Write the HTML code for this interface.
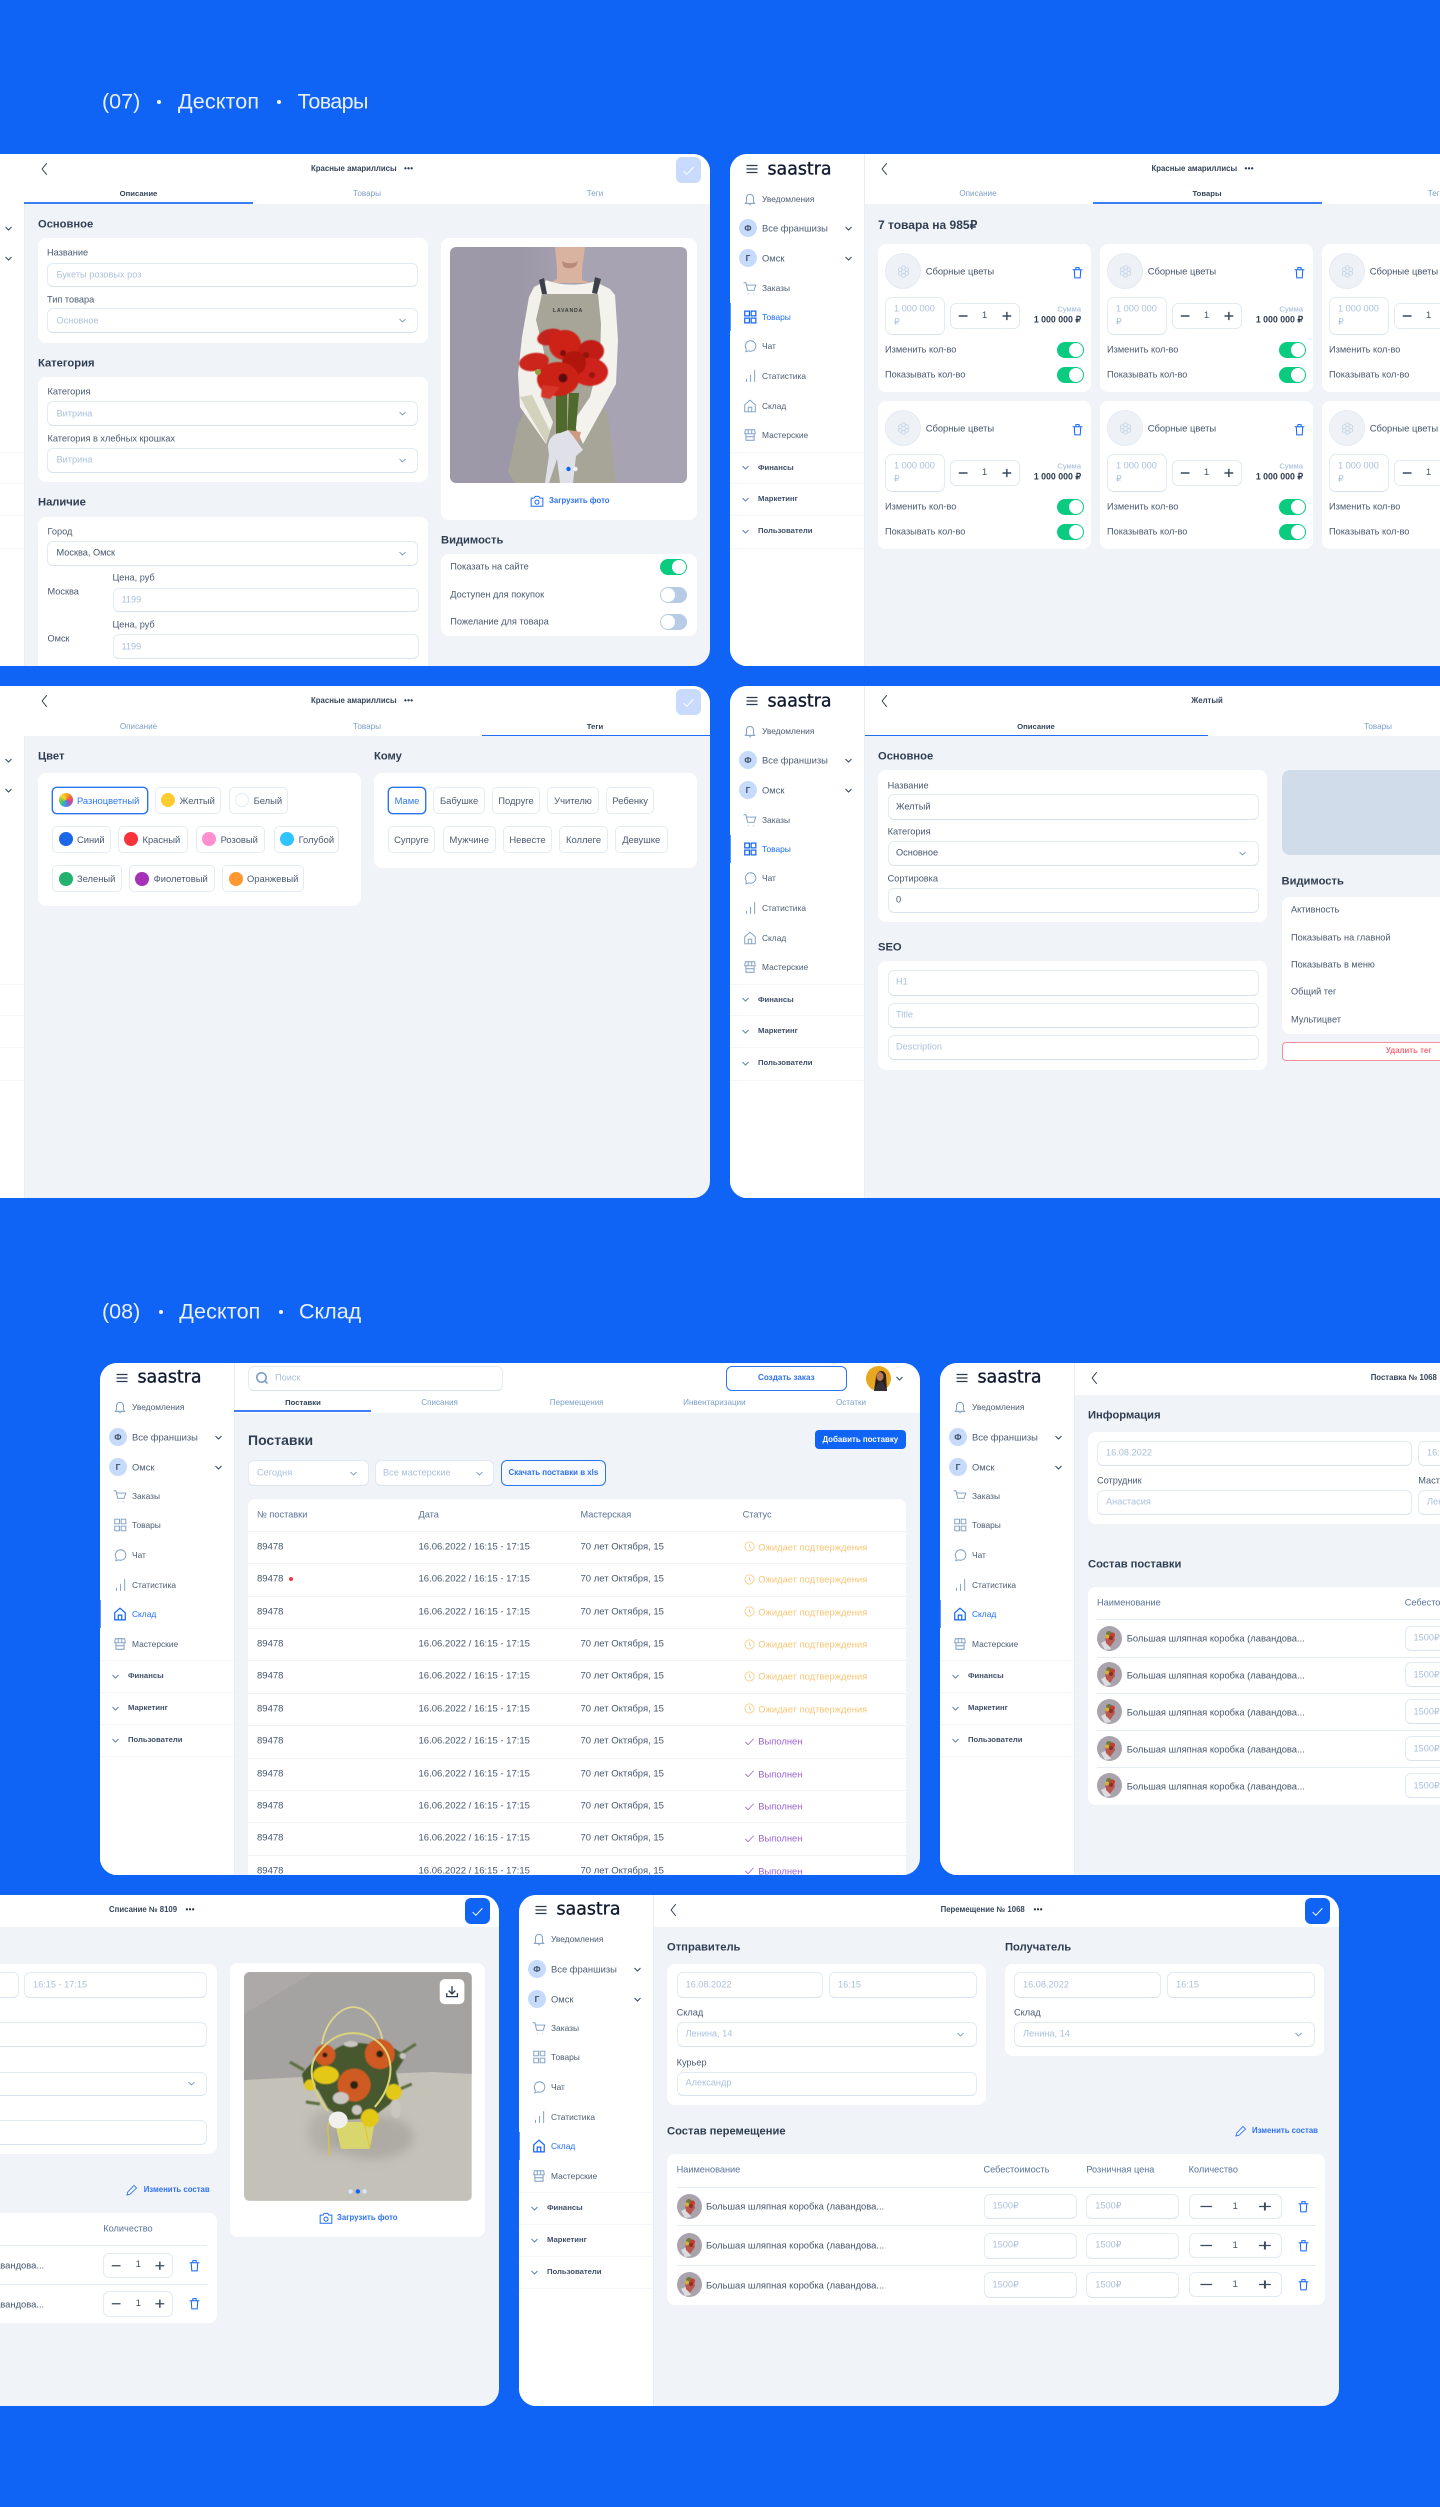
<!DOCTYPE html>
<html lang="ru"><head><meta charset="utf-8"><title>saastra</title>
<style>
html,body{margin:0;padding:0}
body{width:1440px;height:2507px;background:#0f64f6;overflow:hidden;position:relative;font-family:"Liberation Sans","Noto Sans CJK SC",sans-serif;color:#2b3a4e}
.big{position:absolute;color:#e8effe;font-size:21.5px;line-height:1;white-space:nowrap;transform:translateY(-50%)}
.dot{position:absolute;width:4px;height:4px;border-radius:50%;background:#f2f6ff}
.frame{position:absolute;width:820px;height:512px;background:#f0f3f8;border-radius:17px;overflow:hidden}
.in{position:absolute;width:0;height:0}
.side{position:absolute;left:0;top:0;width:134px;height:100%;background:#fff;border-right:1px solid #e8eef5;box-sizing:content-box}
.side>hr{position:absolute;left:0;width:134px;margin:0;border:0;border-top:1px solid #f3f6fa}
.side>.bar{position:absolute;left:0;width:1px;height:28px;background:#5e93f2}
.ic{position:absolute;left:13px;width:14px;height:14px;color:#7a9bc2;fill:none;stroke:currentColor;stroke-width:1.6;overflow:visible}
.ic.on{color:#1565f5;stroke-width:2.1}
.ch{position:absolute;width:9px;height:9px;color:#33465e;fill:none;stroke:currentColor;stroke-width:2.6}
.ch.b{color:#5c84b3}
.logo{position:absolute;left:37.5px;top:15.5px;transform:translateY(-50%);font-family:"DejaVu Sans",sans-serif;font-size:17.4px;line-height:1;color:#101b30;white-space:nowrap;-webkit-text-stroke:.35px #101b30}
.av{position:absolute;left:9px;width:18px;height:18px;border-radius:50%;background:#c6dafc;font-style:normal;font-size:8.4px;font-weight:bold;color:#3a4c63;text-align:center;line-height:18px}
.t{position:absolute;white-space:nowrap;line-height:1;transform:translateY(-50%)}
.tc{position:absolute;white-space:nowrap;line-height:1;transform:translate(-50%,-50%)}
.s{font-size:8.4px;color:#4c5d73;left:32px}
.s2{font-size:9.4px;color:#4c5d73;left:32px}
.s3{font-size:7.7px;font-weight:bold;color:#3f5068;left:28px}
.on-t{color:#1f6df5}
.hd{position:absolute;left:0;top:0;width:820px;height:50px;background:#fff}
.ttl{font-size:7.8px;font-weight:bold;color:#36455a}
.dots{font-size:8px;font-weight:bold;letter-spacing:.3px;color:#2b3a4e}
.tab{font-size:8.1px;color:#7d9fc8}
.tab.a{font-weight:bold;color:#36455a;font-size:7.7px}
.u{position:absolute;height:2px;background:#3d7ff2}
.h{font-size:11.2px;font-weight:bold;color:#2f3e52}
.c{position:absolute;background:#fff;border-radius:8px}
.l{font-size:9.2px;color:#4a5a70}
.p{font-size:9.2px;color:#abc1dc}
.v{font-size:9.2px;color:#43556b}
.f{position:absolute;background:#fff;border:1px solid #e2eaf4;border-bottom-color:#d9e3ef;border-radius:6px;box-sizing:border-box}
.ok{position:absolute;width:25px;height:25.5px;border-radius:6px;background:#0f64f6}
.ok.lt{background:#c8dbfd}
.ok svg{position:absolute;left:6px;top:6.5px;width:13px;height:13px;fill:none;stroke:#fff;stroke-width:1.8}
.tg{position:absolute;width:27px;height:16px;border-radius:8px;background:#0acb80}
.tg:after{content:"";position:absolute;right:1px;top:1px;width:14px;height:14px;border-radius:50%;background:#fff}
.tg.off{background:#b6cbe4}
.tg.off:after{right:auto;left:1px}
.card{position:absolute;width:213px;height:148px;background:#fff;border-radius:8px}
.st{position:absolute;background:#fff;border:1px solid #e2eaf4;border-radius:6px;box-sizing:border-box;text-align:center;font-size:9.6px;color:#43556b}
.st svg{position:absolute;left:0;top:0;width:100%;height:100%;fill:none;stroke:#3a4a5f;stroke-width:1.5}
.st span{position:absolute;left:0;right:0;top:50%;transform:translateY(-50%);line-height:1}
.tr{position:absolute;width:13px;height:13px;fill:none;stroke:#1565f5;stroke-width:1.9}
.fl{position:absolute;left:7px;top:9px;width:36px;height:36px;border-radius:50%;background:#eef2f7;border:1px solid #e4ebf3;box-sizing:border-box}
.fl svg{position:absolute;left:10.5px;top:10.5px;width:13px;height:13px;fill:none;stroke:#c5d5e7;stroke-width:1.7}
.cn{font-size:9.4px;color:#43556b}
.chip{position:absolute;height:27px;background:#fff;border:1px solid #e4ebf4;border-radius:5px;box-sizing:border-box;font-size:9.4px;color:#4a5a70;display:flex;align-items:center;justify-content:center;white-space:nowrap}
.chip.c2{justify-content:flex-start;padding-left:5.6px}
.chip b{display:block;width:14px;height:14px;border-radius:50%;margin-right:4.4px;flex:none}
.chip.act{border:1px solid #2b76f0;color:#2f78f4;box-shadow:0 0 0 .4px #2b76f0}
.row{position:absolute;left:248px;width:658px;height:32.4px;border-top:1.6px solid #eef2f7;box-sizing:border-box;background:#fff}
.row span{position:absolute;top:15px;transform:translateY(-50%);line-height:1;white-space:nowrap;font-size:9.5px;color:#47586e}
.row svg{position:absolute;top:9.5px;left:495.5px;width:11px;height:11px;fill:none;stroke-width:1.7}
.row span.pend{color:#f7c679;font-size:9.4px}.row span.done{color:#9c63d6;font-size:9.4px}
.bt{position:absolute;border-radius:6px;text-align:center;box-sizing:border-box;white-space:nowrap}
.thumb{position:absolute;width:25px;height:25px}
.ln{position:absolute;height:1px;background:#e6ecf4}
.pc{font-size:9.2px;color:#abc1dc}
.up{font-size:7.8px;font-weight:bold;color:#2f72ee}
.cam{position:absolute;width:14px;height:14px;fill:none;stroke:#1f6df5;stroke-width:1.7}
.tn{font-size:9.4px;color:#43556b}
</style></head><body>
<svg width="0" height="0" style="position:absolute">
<symbol id="burger" viewBox="0 0 24 24"><path d="M1 5h22M1 12h22M1 19h22" stroke-width="2.4"/></symbol>
<symbol id="bell" viewBox="0 0 24 24"><path d="M6 17v-7a6 6 0 0 1 12 0v7l2 2.500H4zM10 22h4"/></symbol>
<symbol id="cart" viewBox="0 0 24 24"><path d="M1 3h4l3 13h11l3-9H6"/><path d="M8.500 21.500h.8M17 21.500h.8" stroke-width="2.400"/></symbol>
<symbol id="grid" viewBox="0 0 24 24"><path d="M3 2h8v8H3zM14 2h8v8h-8zM3 14h8v8H3zM14 14h8v8h-8z"/></symbol>
<symbol id="chat" viewBox="0 0 24 24"><path d="M13 3a9 9 0 1 1-3.500 17.300L5 22l.6-5A9 9 0 0 1 13 3z"/></symbol>
<symbol id="stats" viewBox="0 0 24 24"><path d="M6 22v-5M13 22V10M20 22V2"/></symbol>
<symbol id="house" viewBox="0 0 24 24"><path d="M3 10l9-8 9 8v12H3zM9 22v-8h6v8"/></symbol>
<symbol id="shop" viewBox="0 0 24 24"><path d="M4 3h16l1 7H3zM5 10v11h14V10M5 15h14M9 3v7M15 3v7"/></symbol>
<symbol id="chev" viewBox="0 0 24 24"><path d="M4 8l8 8 8-8"/></symbol>
<symbol id="back" viewBox="0 0 24 24"><path d="M15 2L7 12l8 10"/></symbol>
<symbol id="trash" viewBox="0 0 24 24"><path d="M3 7h18M6 7l1 15h10l1-15M9 7V3h6v4"/></symbol>
<symbol id="check" viewBox="0 0 24 24"><path d="M3 13l6 6L21 6"/></symbol>
<symbol id="camera" viewBox="0 0 24 24"><path d="M2 7h5l2-3h6l2 3h5v14H2z"/><circle cx="12" cy="14" r="3.500"/></symbol>
<symbol id="pencil" viewBox="0 0 24 24"><path d="M2 22l1.500-6L16 3l5 5L8 20.500z"/></symbol>
<symbol id="clock" viewBox="0 0 24 24"><circle cx="12" cy="12" r="10"/><path d="M12 6v6.500l3.500 2"/></symbol>
<symbol id="flower" viewBox="0 0 24 24"><circle cx="12" cy="5" r="3.500"/><circle cx="12" cy="19" r="3.500"/><circle cx="6" cy="8.500" r="3.500"/><circle cx="18" cy="8.500" r="3.500"/><circle cx="6" cy="15.500" r="3.500"/><circle cx="18" cy="15.500" r="3.500"/></symbol>
<symbol id="step" viewBox="0 0 70 26" preserveAspectRatio="none"><path d="M8 13h9M53 13h9M57.500 8.500v9"/></symbol>
<symbol id="thumb" viewBox="0 0 25 25"><circle cx="12.500" cy="12.500" r="12.500" fill="#a8a3ad"/><path d="M4 17l6-3 4 9-6 1z" fill="#dcdce0"/><path d="M8 11l9-2 1 5-5 7-4-4z" fill="#b9564e"/><circle cx="12" cy="8" r="3" fill="#6e7b3c"/><circle cx="15.500" cy="9" r="2.500" fill="#c93a2f"/><circle cx="10" cy="10.500" r="2" fill="#d6b13a"/><circle cx="14" cy="12" r="2" fill="#8c2f26"/></symbol>
<filter id="bl" x="-30%" y="-30%" width="160%" height="160%"><feGaussianBlur stdDeviation="5"/></filter>
<filter id="bl1"><feGaussianBlur stdDeviation=".5"/></filter>
<linearGradient id="gw" x1="0" x2="1" y1="0" y2="0"><stop offset="0" stop-color="#9d99a8"/><stop offset=".3" stop-color="#9c98a8"/><stop offset=".55" stop-color="#a8a3b3"/><stop offset="1" stop-color="#a8a3b3"/></linearGradient>
</svg>

<!-- Headings -->
<span class="big" style="left:102px;top:102px">(07)</span><i class="dot" style="left:157px;top:100px"></i><span class="big" style="left:178px;top:102px;letter-spacing:.15px">Десктоп</span><i class="dot" style="left:276.700px;top:100px"></i><span class="big" style="left:297.500px;top:102px;letter-spacing:-.6px">Товары</span>
<span class="big" style="left:102px;top:1311.500px">(08)</span><i class="dot" style="left:159px;top:1309.500px"></i><span class="big" style="left:179.300px;top:1311.500px;letter-spacing:.15px">Десктоп</span><i class="dot" style="left:278.700px;top:1309.500px"></i><span class="big" style="left:299px;top:1311.500px">Склад</span>

<!-- FRAME 1 -->
<div class="frame" style="left:0;top:154px;width:710px;border-radius:0 17px 17px 0">
<div class="side" style="left:-110px"><hr style="top:297.500px"><hr style="top:329px"><hr style="top:361px"><hr style="top:393.500px">
<svg class="ch" style="left:114px;top:70px"><use href="#chev"/></svg><svg class="ch" style="left:114px;top:100px"><use href="#chev"/></svg></div>
<div class="in" style="left:0;top:-154px">
<div class="hd" style="left:24px;top:154px;width:686px"></div>
<svg class="ic" style="left:38px;top:162px;color:#2b3a4e;stroke-width:1.6"><use href="#back"/></svg>
<span class="t ttl" style="left:311px;top:169px">Красные амариллисы</span><span class="t dots" style="left:404px;top:169px">•••</span>
<div class="ok lt" style="left:676px;top:157px"><svg><use href="#check"/></svg></div>
<span class="tc tab a" style="left:138.500px;top:194px">Описание</span><span class="tc tab" style="left:367px;top:194px">Товары</span><span class="tc tab" style="left:595px;top:194px">Теги</span>
<div class="u" style="left:24px;top:202px;width:229px"></div>

<span class="t h" style="left:38px;top:224.500px">Основное</span>
<div class="c" style="left:38px;top:238px;width:389.500px;height:105px"></div>
<span class="t l" style="left:47px;top:253px">Название</span>
<div class="f" style="left:47px;top:262.500px;width:371px;height:24.500px"></div><span class="t p" style="left:56.500px;top:274.500px">Букеты розовых роз</span>
<span class="t l" style="left:47px;top:299.500px">Тип товара</span>
<div class="f" style="left:47px;top:308px;width:371px;height:25px"></div><span class="t p" style="left:56.500px;top:320.500px">Основное</span>
<svg class="ch b" style="left:398px;top:316px;stroke-width:2"><use href="#chev"/></svg>

<span class="t h" style="left:38px;top:363.500px">Категория</span>
<div class="c" style="left:38px;top:377px;width:389.500px;height:105px"></div>
<span class="t l" style="left:47.500px;top:392px">Категория</span>
<div class="f" style="left:47px;top:401px;width:371px;height:25px"></div><span class="t p" style="left:56.500px;top:413.500px">Витрина</span>
<svg class="ch b" style="left:398px;top:409px;stroke-width:2"><use href="#chev"/></svg>
<span class="t l" style="left:47.500px;top:439px">Категория в хлебных крошках</span>
<div class="f" style="left:47px;top:448px;width:371px;height:25px"></div><span class="t p" style="left:56.500px;top:460px">Витрина</span>
<svg class="ch b" style="left:398px;top:456px;stroke-width:2"><use href="#chev"/></svg>

<span class="t h" style="left:38px;top:502.500px">Наличие</span>
<div class="c" style="left:38px;top:517px;width:389.500px;height:170px"></div>
<span class="t l" style="left:47.500px;top:532px">Город</span>
<div class="f" style="left:47px;top:540.500px;width:371px;height:25px"></div><span class="t v" style="left:56.500px;top:553px">Москва, Омск</span>
<svg class="ch b" style="left:398px;top:548.500px;stroke-width:2"><use href="#chev"/></svg>
<span class="t l" style="left:112.500px;top:578px">Цена, руб</span><span class="t l" style="left:47.500px;top:592px">Москва</span>
<div class="f" style="left:112.500px;top:587.500px;width:306px;height:24.500px"></div><span class="t p" style="left:121.500px;top:599.500px">1199</span>
<span class="t l" style="left:112.500px;top:625px">Цена, руб</span><span class="t l" style="left:47.500px;top:638.500px">Омск</span>
<div class="f" style="left:112.500px;top:634px;width:306px;height:24.500px"></div><span class="t p" style="left:121.500px;top:646.500px">1199</span>

<div class="c" style="left:441px;top:237.500px;width:255.500px;height:282px"></div>
<svg style="position:absolute;left:450.300px;top:246.700px;width:237px;height:236px;border-radius:6px" viewBox="0 0 237 236">
<rect width="237" height="236" fill="url(#gw)"/>
<path d="M91 47H148L152 80L146 150L158 167L166 236H65L58 225L68 178L82 150L92 100L86 73Z" fill="#a6a598"/>
<path d="M105 0h30l-3 22v11l8 3-40 0 7-4V22z" fill="#d9b3a0"/>
<path d="M112 14c4 3 12 3 16 0l-2 5c-4 3-10 3-13 0z" fill="#b98a78"/>
<path d="M96 33c15 6 35 6 50 1l2 13H92z" fill="#f4f2ec"/>
<path d="M96 34L84 40 79 50 72 90 68 127 70 160 96 197 103 175 92 150 94 105 86 73 92 47z" fill="#f2f0ea"/>
<path d="M146 35L160 42 165 48 168 93 166 137 133 197 123 175 140 150 150 110 151 77 148 47z" fill="#f4f2ec"/>
<path d="M70 150c8 16 18 32 26 46l4-12-12-24-6-12z" fill="#d3d2bc"/>
<path d="M92 47l-3-14 5-2 3 16zM147 47l4-15-6-2-3 16z" fill="#3c4048"/>
<text x="118" y="65" text-anchor="middle" font-family="Liberation Sans,sans-serif" font-size="5.200" font-weight="bold" letter-spacing=".8" fill="#3a3a38">LAVANDA</text>
<path d="M106 146h11v46h-11zM119 146h10l-4 46h-8z" fill="#4f6a2c"/>
<g filter="url(#bl1)">
<ellipse cx="100" cy="90" rx="13" ry="8" fill="#c4201a" transform="rotate(-15 100 90)"/>
<ellipse cx="84" cy="115" rx="15" ry="9" fill="#cc251e" transform="rotate(-10 84 115)"/>
<ellipse cx="115" cy="98" rx="16" ry="15" fill="#cf2419"/>
<ellipse cx="141" cy="104" rx="13" ry="11" fill="#c11b14"/>
<ellipse cx="140" cy="125" rx="18" ry="14" fill="#d0241b"/>
<ellipse cx="124" cy="116" rx="12" ry="12" fill="#b11611"/>
<ellipse cx="108" cy="132" rx="21" ry="17" fill="#cb2118"/>
<path d="M92 138l18 2-10 12-9-2z" fill="#d8352c"/>
<circle cx="113" cy="131" r="4.500" fill="#5d0d0b"/><circle cx="113" cy="106" r="3" fill="#7f110e"/><circle cx="136" cy="108" r="3" fill="#8e120e"/><circle cx="142" cy="128" r="3" fill="#951510"/>
</g>
<circle cx="88" cy="125" r="3" fill="#8ea13f"/>
<path d="M118 183l13 2-3 11-8 2z" fill="#cf9983"/>
<path d="M98 200c0-8 6-14 12-14l8-3 5 6 10 14-7 6-3 27h-13l-3-24-8 24h-4l4-28z" fill="#dfe0e8"/>
<circle cx="111" cy="222" r="2.200" fill="#dfe6f2"/><circle cx="118.500" cy="222" r="2.200" fill="#0f64f6"/><circle cx="125.500" cy="222" r="2.200" fill="#eef2f8"/>
</svg>
<svg class="cam" style="left:530px;top:494px"><use href="#camera"/></svg><span class="t up" style="left:549px;top:500.500px">Загрузить фото</span>

<span class="t h" style="left:441px;top:540.500px">Видимость</span>
<div class="c" style="left:441px;top:554px;width:255.500px;height:82px"></div>
<span class="t l" style="left:450.300px;top:567px">Показать на сайте</span><div class="tg" style="left:660px;top:559px"></div>
<span class="t l" style="left:450.300px;top:594.500px">Доступен для покупок</span><div class="tg off" style="left:660px;top:586.500px"></div>
<span class="t l" style="left:450.300px;top:622px">Пожелание для товара</span><div class="tg off" style="left:660px;top:614px"></div>
</div></div>

<!-- FRAME 2 -->
<div class="frame" style="left:730px;top:154px;width:710px;border-radius:17px 0 0 17px">
<div class="side">
<svg class="ic" style="left:16px;top:9px;width:12px;height:12px;color:#2b3a4e;stroke-width:2"><use href="#burger"/></svg><span class="logo">saastra</span>
<svg class="ic" style="top:37.500px"><use href="#bell"/></svg><span class="t s" style="top:44.500px">Уведомления</span>
<i class="av" style="top:65px">Ф</i><span class="t s2" style="top:74px">Все франшизы</span><svg class="ch" style="left:114px;top:70px"><use href="#chev"/></svg>
<i class="av" style="top:95px">Г</i><span class="t s2" style="top:104px">Омск</span><svg class="ch" style="left:114px;top:100px"><use href="#chev"/></svg>
<svg class="ic" style="top:126.500px"><use href="#cart"/></svg><span class="t s" style="top:133.500px">Заказы</span>
<div class="bar" style="top:149px"></div><svg class="ic on" style="top:155.500px"><use href="#grid"/></svg><span class="t s on-t" style="top:162.500px">Товары</span>
<svg class="ic" style="top:185px"><use href="#chat"/></svg><span class="t s" style="top:192px">Чат</span>
<svg class="ic" style="top:215px"><use href="#stats"/></svg><span class="t s" style="top:222px">Статистика</span>
<svg class="ic" style="top:244.500px"><use href="#house"/></svg><span class="t s" style="top:251.500px">Склад</span>
<svg class="ic" style="top:274px"><use href="#shop"/></svg><span class="t s" style="top:281px">Мастерские</span>
<hr style="top:297.500px"><hr style="top:329px"><hr style="top:361px"><hr style="top:393.500px">
<svg class="ch b" style="left:11px;top:309px"><use href="#chev"/></svg><span class="t s3" style="top:313.500px">Финансы</span>
<svg class="ch b" style="left:11px;top:341px"><use href="#chev"/></svg><span class="t s3" style="top:345px">Маркетинг</span>
<svg class="ch b" style="left:11px;top:373px"><use href="#chev"/></svg><span class="t s3" style="top:377px">Пользователи</span>
</div>
<div class="in" style="left:-730px;top:-154px">
<div class="hd" style="left:865px;top:154px;width:575px"></div>
<svg class="ic" style="left:878px;top:162px;color:#2b3a4e;stroke-width:1.6"><use href="#back"/></svg>
<span class="t ttl" style="left:1151.500px;top:169px">Красные амариллисы</span><span class="t dots" style="left:1244.500px;top:169px">•••</span>
<span class="tc tab" style="left:978px;top:194px">Описание</span><span class="tc tab a" style="left:1207px;top:194px">Товары</span><span class="tc tab" style="left:1436px;top:194px">Теги</span>
<div class="u" style="left:1093px;top:202px;width:229px"></div>
<span class="t" style="left:878px;top:224.500px;font-size:12px;font-weight:bold;color:#2f3e52">7 товара на 985₽</span>

<div class="card" style="left:878px;top:244px"><div class="fl"><svg><use href="#flower"/></svg></div><span class="t cn" style="left:47.700px;top:27px">Сборные цветы</span><svg class="tr" style="left:192.500px;top:21.500px"><use href="#trash"/></svg><div class="f" style="left:7px;top:53px;width:60px;height:38px;border-radius:7px"></div><span class="t pc" style="left:16px;top:64.700px">1 000 000</span><span class="t pc" style="left:16px;top:77.500px">₽</span><div class="st" style="left:71.600px;top:59px;width:70px;height:26px"><svg><use href="#step"/></svg><span>1</span></div><span class="t" style="right:10px;top:65.400px;font-size:7.500px;color:#9db7d6">Сумма</span><span class="t" style="right:10px;top:76.400px;font-size:8.800px;font-weight:bold;color:#2b3a4e">1 000 000 ₽</span><span class="t l" style="left:7px;top:105.700px">Изменить кол-во</span><div class="tg" style="left:179px;top:98px"></div><span class="t l" style="left:7px;top:131px">Показывать кол-во</span><div class="tg" style="left:179px;top:123px"></div></div>
<div class="card" style="left:1100px;top:244px"><div class="fl"><svg><use href="#flower"/></svg></div><span class="t cn" style="left:47.700px;top:27px">Сборные цветы</span><svg class="tr" style="left:192.500px;top:21.500px"><use href="#trash"/></svg><div class="f" style="left:7px;top:53px;width:60px;height:38px;border-radius:7px"></div><span class="t pc" style="left:16px;top:64.700px">1 000 000</span><span class="t pc" style="left:16px;top:77.500px">₽</span><div class="st" style="left:71.600px;top:59px;width:70px;height:26px"><svg><use href="#step"/></svg><span>1</span></div><span class="t" style="right:10px;top:65.400px;font-size:7.500px;color:#9db7d6">Сумма</span><span class="t" style="right:10px;top:76.400px;font-size:8.800px;font-weight:bold;color:#2b3a4e">1 000 000 ₽</span><span class="t l" style="left:7px;top:105.700px">Изменить кол-во</span><div class="tg" style="left:179px;top:98px"></div><span class="t l" style="left:7px;top:131px">Показывать кол-во</span><div class="tg" style="left:179px;top:123px"></div></div>
<div class="card" style="left:1322px;top:244px"><div class="fl"><svg><use href="#flower"/></svg></div><span class="t cn" style="left:47.700px;top:27px">Сборные цветы</span><div class="f" style="left:7px;top:53px;width:60px;height:38px;border-radius:7px"></div><span class="t pc" style="left:16px;top:64.700px">1 000 000</span><span class="t pc" style="left:16px;top:77.500px">₽</span><div class="st" style="left:71.600px;top:59px;width:70px;height:26px"><svg><use href="#step"/></svg><span>1</span></div><span class="t l" style="left:7px;top:105.700px">Изменить кол-во</span><span class="t l" style="left:7px;top:131px">Показывать кол-во</span></div>
<div class="card" style="left:878px;top:401px"><div class="fl"><svg><use href="#flower"/></svg></div><span class="t cn" style="left:47.700px;top:27px">Сборные цветы</span><svg class="tr" style="left:192.500px;top:21.500px"><use href="#trash"/></svg><div class="f" style="left:7px;top:53px;width:60px;height:38px;border-radius:7px"></div><span class="t pc" style="left:16px;top:64.700px">1 000 000</span><span class="t pc" style="left:16px;top:77.500px">₽</span><div class="st" style="left:71.600px;top:59px;width:70px;height:26px"><svg><use href="#step"/></svg><span>1</span></div><span class="t" style="right:10px;top:65.400px;font-size:7.500px;color:#9db7d6">Сумма</span><span class="t" style="right:10px;top:76.400px;font-size:8.800px;font-weight:bold;color:#2b3a4e">1 000 000 ₽</span><span class="t l" style="left:7px;top:105.700px">Изменить кол-во</span><div class="tg" style="left:179px;top:98px"></div><span class="t l" style="left:7px;top:131px">Показывать кол-во</span><div class="tg" style="left:179px;top:123px"></div></div>
<div class="card" style="left:1100px;top:401px"><div class="fl"><svg><use href="#flower"/></svg></div><span class="t cn" style="left:47.700px;top:27px">Сборные цветы</span><svg class="tr" style="left:192.500px;top:21.500px"><use href="#trash"/></svg><div class="f" style="left:7px;top:53px;width:60px;height:38px;border-radius:7px"></div><span class="t pc" style="left:16px;top:64.700px">1 000 000</span><span class="t pc" style="left:16px;top:77.500px">₽</span><div class="st" style="left:71.600px;top:59px;width:70px;height:26px"><svg><use href="#step"/></svg><span>1</span></div><span class="t" style="right:10px;top:65.400px;font-size:7.500px;color:#9db7d6">Сумма</span><span class="t" style="right:10px;top:76.400px;font-size:8.800px;font-weight:bold;color:#2b3a4e">1 000 000 ₽</span><span class="t l" style="left:7px;top:105.700px">Изменить кол-во</span><div class="tg" style="left:179px;top:98px"></div><span class="t l" style="left:7px;top:131px">Показывать кол-во</span><div class="tg" style="left:179px;top:123px"></div></div>
<div class="card" style="left:1322px;top:401px"><div class="fl"><svg><use href="#flower"/></svg></div><span class="t cn" style="left:47.700px;top:27px">Сборные цветы</span><div class="f" style="left:7px;top:53px;width:60px;height:38px;border-radius:7px"></div><span class="t pc" style="left:16px;top:64.700px">1 000 000</span><span class="t pc" style="left:16px;top:77.500px">₽</span><div class="st" style="left:71.600px;top:59px;width:70px;height:26px"><svg><use href="#step"/></svg><span>1</span></div><span class="t l" style="left:7px;top:105.700px">Изменить кол-во</span><span class="t l" style="left:7px;top:131px">Показывать кол-во</span></div>
</div></div>

<!-- FRAME 3 -->
<div class="frame" style="left:0;top:686px;width:710px;border-radius:0 17px 17px 0">
<div class="side" style="left:-110px"><hr style="top:297.500px"><hr style="top:329px"><hr style="top:361px"><hr style="top:393.500px">
<svg class="ch" style="left:114px;top:70px"><use href="#chev"/></svg><svg class="ch" style="left:114px;top:100px"><use href="#chev"/></svg></div>
<div class="in" style="left:0;top:-686px">
<div class="hd" style="left:24px;top:686px;width:686px"></div>
<svg class="ic" style="left:38px;top:694px;color:#2b3a4e;stroke-width:1.6"><use href="#back"/></svg>
<span class="t ttl" style="left:311px;top:701px">Красные амариллисы</span><span class="t dots" style="left:404px;top:701px">•••</span>
<div class="ok lt" style="left:676px;top:689px"><svg><use href="#check"/></svg></div>
<span class="tc tab" style="left:138.500px;top:726.500px">Описание</span><span class="tc tab" style="left:367px;top:726.500px">Товары</span><span class="tc tab a" style="left:595px;top:726.500px">Теги</span>
<div class="u" style="left:481.500px;top:734.500px;width:228.500px;height:1.500px;background:#1f6df5"></div>
<span class="t h" style="left:38px;top:757px">Цвет</span><span class="t h" style="left:374px;top:757px">Кому</span>
<div class="c" style="left:38px;top:773px;width:322.500px;height:133px"></div>
<div class="c" style="left:374px;top:773px;width:322.500px;height:95px"></div>
<div class="chip c2 act" style="left:52px;top:786.500px;width:95.500px"><b style="background:conic-gradient(#f6b21f,#f2792a,#e8457c,#9a58c9,#4f8be8,#28c2a0,#8acb3e,#f6d531,#f6b21f)"></b>Разноцветный</div>
<div class="chip c2" style="left:154.700px;top:786.500px;width:66px"><b style="background:#ffcb2f"></b>Желтый</div>
<div class="chip c2" style="left:228.600px;top:786.500px;width:59.700px"><b style="background:#fff;border:1px solid #e4ebf4;box-sizing:border-box"></b>Белый</div>
<div class="chip c2" style="left:52px;top:825.700px;width:58.600px"><b style="background:#1c66e8"></b>Синий</div>
<div class="chip c2" style="left:117.500px;top:825.700px;width:70.700px"><b style="background:#f9333a"></b>Красный</div>
<div class="chip c2" style="left:195.600px;top:825.700px;width:69.800px"><b style="background:#ff8fce"></b>Розовый</div>
<div class="chip c2" style="left:273.600px;top:825.700px;width:65.700px"><b style="background:#2fc4fc"></b>Голубой</div>
<div class="chip c2" style="left:52px;top:865px;width:69.700px"><b style="background:#23b26d"></b>Зеленый</div>
<div class="chip c2" style="left:128.600px;top:865px;width:86.300px"><b style="background:#a632b8"></b>Фиолетовый</div>
<div class="chip c2" style="left:222px;top:865px;width:82.400px"><b style="background:#ff9831"></b>Оранжевый</div>
<div class="chip act" style="left:388px;top:786.500px;width:38px">Маме</div>
<div class="chip" style="left:433.400px;top:786.500px;width:51.400px">Бабушке</div>
<div class="chip" style="left:491.700px;top:786.500px;width:48.700px">Подруге</div>
<div class="chip" style="left:547.300px;top:786.500px;width:51.400px">Учителю</div>
<div class="chip" style="left:606px;top:786.500px;width:48.300px">Ребенку</div>
<div class="chip" style="left:388px;top:826.300px;width:47px">Супруге</div>
<div class="chip" style="left:442.600px;top:826.300px;width:53.300px">Мужчине</div>
<div class="chip" style="left:502.700px;top:826.300px;width:49.600px">Невесте</div>
<div class="chip" style="left:559.200px;top:826.300px;width:48.700px">Коллеге</div>
<div class="chip" style="left:614.800px;top:826.300px;width:52.800px">Девушке</div>
</div></div>

<!-- FRAME 4 -->
<div class="frame" style="left:730px;top:686px;width:710px;border-radius:17px 0 0 17px">
<div class="side">
<svg class="ic" style="left:16px;top:9px;width:12px;height:12px;color:#2b3a4e;stroke-width:2"><use href="#burger"/></svg><span class="logo">saastra</span>
<svg class="ic" style="top:37.500px"><use href="#bell"/></svg><span class="t s" style="top:44.500px">Уведомления</span>
<i class="av" style="top:65px">Ф</i><span class="t s2" style="top:74px">Все франшизы</span><svg class="ch" style="left:114px;top:70px"><use href="#chev"/></svg>
<i class="av" style="top:95px">Г</i><span class="t s2" style="top:104px">Омск</span><svg class="ch" style="left:114px;top:100px"><use href="#chev"/></svg>
<svg class="ic" style="top:126.500px"><use href="#cart"/></svg><span class="t s" style="top:133.500px">Заказы</span>
<div class="bar" style="top:149px"></div><svg class="ic on" style="top:155.500px"><use href="#grid"/></svg><span class="t s on-t" style="top:162.500px">Товары</span>
<svg class="ic" style="top:185px"><use href="#chat"/></svg><span class="t s" style="top:192px">Чат</span>
<svg class="ic" style="top:215px"><use href="#stats"/></svg><span class="t s" style="top:222px">Статистика</span>
<svg class="ic" style="top:244.500px"><use href="#house"/></svg><span class="t s" style="top:251.500px">Склад</span>
<svg class="ic" style="top:274px"><use href="#shop"/></svg><span class="t s" style="top:281px">Мастерские</span>
<hr style="top:297.500px"><hr style="top:329px"><hr style="top:361px"><hr style="top:393.500px">
<svg class="ch b" style="left:11px;top:309px"><use href="#chev"/></svg><span class="t s3" style="top:313.500px">Финансы</span>
<svg class="ch b" style="left:11px;top:341px"><use href="#chev"/></svg><span class="t s3" style="top:345px">Маркетинг</span>
<svg class="ch b" style="left:11px;top:373px"><use href="#chev"/></svg><span class="t s3" style="top:377px">Пользователи</span>
</div>
<div class="in" style="left:-730px;top:-686px">
<div class="hd" style="left:865px;top:686px;width:575px"></div>
<svg class="ic" style="left:878px;top:694px;color:#2b3a4e;stroke-width:1.6"><use href="#back"/></svg>
<span class="tc ttl" style="left:1207px;top:701px">Желтый</span>
<span class="tc tab a" style="left:1036px;top:726.500px">Описание</span><span class="tc tab" style="left:1378px;top:726.500px">Товары</span>
<div class="u" style="left:865px;top:734.500px;width:342.500px;height:1.500px;background:#1f6df5"></div>
<span class="t h" style="left:878px;top:757px">Основное</span>
<div class="c" style="left:878px;top:770px;width:389.300px;height:152px"></div>
<span class="t l" style="left:887.600px;top:785.700px">Название</span><div class="f" style="left:887.600px;top:794px;width:371px;height:26px"></div><span class="t v" style="left:896px;top:806.500px">Желтый</span>
<span class="t l" style="left:887.600px;top:832px">Категория</span><div class="f" style="left:887.600px;top:841px;width:371px;height:25px"></div><span class="t v" style="left:896px;top:853px">Основное</span><svg class="ch b" style="left:1238px;top:849px;stroke-width:2"><use href="#chev"/></svg>
<span class="t l" style="left:887.600px;top:879px">Сортировка</span><div class="f" style="left:887.600px;top:888px;width:371px;height:25px"></div><span class="t v" style="left:896px;top:899.500px">0</span>
<span class="t h" style="left:878px;top:947.500px">SEO</span>
<div class="c" style="left:878px;top:961px;width:389.300px;height:109px"></div>
<div class="f" style="left:887.600px;top:970px;width:371px;height:26px"></div><span class="t p" style="left:896px;top:982px">H1</span>
<div class="f" style="left:887.600px;top:1002.700px;width:371px;height:25.300px"></div><span class="t p" style="left:896px;top:1014.500px">Title</span>
<div class="f" style="left:887.600px;top:1035px;width:371px;height:25px"></div><span class="t p" style="left:896px;top:1047px">Description</span>
<div class="c" style="left:1281.500px;top:770px;width:254.500px;height:85px;background:#d1dcea"></div>
<span class="t h" style="left:1281.500px;top:881.500px">Видимость</span>
<div class="c" style="left:1281.500px;top:897px;width:254.500px;height:136.500px"></div>
<span class="t l" style="left:1291px;top:910px">Активность</span><span class="t l" style="left:1291px;top:937.600px">Показывать на главной</span><span class="t l" style="left:1291px;top:964.800px">Показывать в меню</span><span class="t l" style="left:1291px;top:992px">Общий тег</span><span class="t l" style="left:1291px;top:1019.500px">Мультицвет</span>
<div class="bt" style="left:1281.500px;top:1042px;width:254.500px;height:18.500px;background:#fff;border:1px solid #f58c97;border-radius:4px"></div><span class="tc" style="left:1408.700px;top:1051px;font-size:7.800px;font-weight:bold;color:#f56b79">Удалить тег</span>
</div></div>

<!-- FRAME 5 -->
<div class="frame" style="left:100px;top:1362.500px">
<div class="side">
<svg class="ic" style="left:16px;top:9px;width:12px;height:12px;color:#2b3a4e;stroke-width:2"><use href="#burger"/></svg><span class="logo">saastra</span>
<svg class="ic" style="top:37.500px"><use href="#bell"/></svg><span class="t s" style="top:44.500px">Уведомления</span>
<i class="av" style="top:65px">Ф</i><span class="t s2" style="top:74px">Все франшизы</span><svg class="ch" style="left:114px;top:70px"><use href="#chev"/></svg>
<i class="av" style="top:95px">Г</i><span class="t s2" style="top:104px">Омск</span><svg class="ch" style="left:114px;top:100px"><use href="#chev"/></svg>
<svg class="ic" style="top:126.500px"><use href="#cart"/></svg><span class="t s" style="top:133.500px">Заказы</span>
<svg class="ic" style="top:155.500px"><use href="#grid"/></svg><span class="t s" style="top:162.500px">Товары</span>
<svg class="ic" style="top:185px"><use href="#chat"/></svg><span class="t s" style="top:192px">Чат</span>
<svg class="ic" style="top:215px"><use href="#stats"/></svg><span class="t s" style="top:222px">Статистика</span>
<div class="bar" style="top:237.500px"></div><svg class="ic on" style="top:244.500px"><use href="#house"/></svg><span class="t s on-t" style="top:251.500px">Склад</span>
<svg class="ic" style="top:274px"><use href="#shop"/></svg><span class="t s" style="top:281px">Мастерские</span>
<hr style="top:297.500px"><hr style="top:329px"><hr style="top:361px"><hr style="top:393.500px">
<svg class="ch b" style="left:11px;top:309px"><use href="#chev"/></svg><span class="t s3" style="top:313.500px">Финансы</span>
<svg class="ch b" style="left:11px;top:341px"><use href="#chev"/></svg><span class="t s3" style="top:345px">Маркетинг</span>
<svg class="ch b" style="left:11px;top:373px"><use href="#chev"/></svg><span class="t s3" style="top:377px">Пользователи</span>
</div>
<div class="in" style="left:-100px;top:-1362.500px">
<div class="hd" style="left:235px;top:1362.500px;width:685px;height:50px"></div>
<div class="f" style="left:248px;top:1366px;width:254.500px;height:24.500px"></div>
<svg class="ic" style="left:256px;top:1372px;width:12px;height:12px;color:#7d9fc8"><circle cx="5.500" cy="5.500" r="4.700"/><path d="M9 9l2.500 2.500"/></svg><span class="t p" style="left:275px;top:1378px">Поиск</span>
<div class="bt" style="left:726px;top:1366px;width:120.600px;height:24.500px;background:#fff;border:1px solid #2b76f0;line-height:22.500px;font-size:8.100px;font-weight:bold;color:#2f72ee">Создать заказ</div>
<svg style="position:absolute;left:865.500px;top:1365.500px;width:25px;height:25px" viewBox="0 0 25 25"><circle cx="12.500" cy="12.500" r="12.500" fill="#e7a820"/><path d="M8 25l2-14c1-7 8-8 10-2l1 16z" fill="#2c211b"/><ellipse cx="14" cy="10.500" rx="3.500" ry="4.500" fill="#b67a56"/><path d="M9 25c1-6 4-9 6-9s4 3 5 9z" fill="#33303a"/></svg>
<svg class="ch" style="left:894.500px;top:1373.500px"><use href="#chev"/></svg>
<span class="tc tab a" style="left:303px;top:1403.400px">Поставки</span><span class="tc tab" style="left:439.600px;top:1403.400px">Списания</span><span class="tc tab" style="left:576.700px;top:1403.400px">Перемещения</span><span class="tc tab" style="left:714.400px;top:1403.400px">Инвентаризации</span><span class="tc tab" style="left:851px;top:1403.400px">Остатки</span>
<div class="u" style="left:234px;top:1410.300px;width:137px"></div>
<span class="t" style="left:248px;top:1440px;font-size:14px;font-weight:bold;color:#2f3e52">Поставки</span>
<div class="bt" style="left:815px;top:1430px;width:90.700px;height:19px;background:#0f64f6;line-height:19px;font-size:7.900px;font-weight:bold;color:#fff;border-radius:4px">Добавить поставку</div>
<div class="f" style="left:248px;top:1460px;width:120.600px;height:25.700px"></div><span class="t p" style="left:257px;top:1472.500px">Сегодня</span><svg class="ch b" style="left:348.500px;top:1468.500px;stroke-width:2"><use href="#chev"/></svg>
<div class="f" style="left:374.600px;top:1460px;width:119.700px;height:25.700px"></div><span class="t p" style="left:383px;top:1472.500px">Все мастерские</span><svg class="ch b" style="left:474.500px;top:1468.500px;stroke-width:2"><use href="#chev"/></svg>
<div class="bt" style="left:500.800px;top:1460px;width:105.200px;height:25.700px;background:#f6f9fe;border:1px solid #2b76f0;line-height:23.500px;font-size:7.900px;font-weight:bold;color:#2f72ee">Скачать поставки в xls</div>
<div class="c" style="left:248px;top:1499px;width:657.700px;height:400px"></div>
<span class="t v" style="left:257px;top:1514.600px;color:#5a7397">№ поставки</span><span class="t v" style="left:418.500px;top:1514.600px;color:#5a7397">Дата</span><span class="t v" style="left:580.500px;top:1514.600px;color:#5a7397">Мастерская</span><span class="t v" style="left:742.600px;top:1514.600px;color:#5a7397">Статус</span>
<div class="row" style="top:1530.800px"><span style="left:9px">89478</span><span style="left:170.500px">16.06.2022 / 16:15 - 17:15</span><span style="left:332.500px">70 лет Октября, 15</span><svg style="stroke:#f7c679"><use href="#clock"/></svg><span class="pend" style="left:510.300px">Ожидает подтверждения</span></div>
<div class="row" style="top:1563.200px"><span style="left:9px">89478</span><i style="position:absolute;left:40.500px;top:13px;width:4px;height:4px;border-radius:50%;background:#f23648"></i><span style="left:170.500px">16.06.2022 / 16:15 - 17:15</span><span style="left:332.500px">70 лет Октября, 15</span><svg style="stroke:#f7c679"><use href="#clock"/></svg><span class="pend" style="left:510.300px">Ожидает подтверждения</span></div>
<div class="row" style="top:1595.600px"><span style="left:9px">89478</span><span style="left:170.500px">16.06.2022 / 16:15 - 17:15</span><span style="left:332.500px">70 лет Октября, 15</span><svg style="stroke:#f7c679"><use href="#clock"/></svg><span class="pend" style="left:510.300px">Ожидает подтверждения</span></div>
<div class="row" style="top:1628px"><span style="left:9px">89478</span><span style="left:170.500px">16.06.2022 / 16:15 - 17:15</span><span style="left:332.500px">70 лет Октября, 15</span><svg style="stroke:#f7c679"><use href="#clock"/></svg><span class="pend" style="left:510.300px">Ожидает подтверждения</span></div>
<div class="row" style="top:1660.400px"><span style="left:9px">89478</span><span style="left:170.500px">16.06.2022 / 16:15 - 17:15</span><span style="left:332.500px">70 лет Октября, 15</span><svg style="stroke:#f7c679"><use href="#clock"/></svg><span class="pend" style="left:510.300px">Ожидает подтверждения</span></div>
<div class="row" style="top:1692.800px"><span style="left:9px">89478</span><span style="left:170.500px">16.06.2022 / 16:15 - 17:15</span><span style="left:332.500px">70 лет Октября, 15</span><svg style="stroke:#f7c679"><use href="#clock"/></svg><span class="pend" style="left:510.300px">Ожидает подтверждения</span></div>
<div class="row" style="top:1725.200px"><span style="left:9px">89478</span><span style="left:170.500px">16.06.2022 / 16:15 - 17:15</span><span style="left:332.500px">70 лет Октября, 15</span><svg style="stroke:#9c63d6"><use href="#check"/></svg><span class="done" style="left:510.300px">Выполнен</span></div>
<div class="row" style="top:1757.600px"><span style="left:9px">89478</span><span style="left:170.500px">16.06.2022 / 16:15 - 17:15</span><span style="left:332.500px">70 лет Октября, 15</span><svg style="stroke:#9c63d6"><use href="#check"/></svg><span class="done" style="left:510.300px">Выполнен</span></div>
<div class="row" style="top:1790px"><span style="left:9px">89478</span><span style="left:170.500px">16.06.2022 / 16:15 - 17:15</span><span style="left:332.500px">70 лет Октября, 15</span><svg style="stroke:#9c63d6"><use href="#check"/></svg><span class="done" style="left:510.300px">Выполнен</span></div>
<div class="row" style="top:1822.400px"><span style="left:9px">89478</span><span style="left:170.500px">16.06.2022 / 16:15 - 17:15</span><span style="left:332.500px">70 лет Октября, 15</span><svg style="stroke:#9c63d6"><use href="#check"/></svg><span class="done" style="left:510.300px">Выполнен</span></div>
<div class="row" style="top:1854.800px"><span style="left:9px">89478</span><span style="left:170.500px">16.06.2022 / 16:15 - 17:15</span><span style="left:332.500px">70 лет Октября, 15</span><svg style="stroke:#9c63d6"><use href="#check"/></svg><span class="done" style="left:510.300px">Выполнен</span></div>
</div></div>

<!-- FRAME 6 -->
<div class="frame" style="left:940px;top:1362.500px;width:500px;border-radius:17px 0 0 17px">
<div class="side">
<svg class="ic" style="left:16px;top:9px;width:12px;height:12px;color:#2b3a4e;stroke-width:2"><use href="#burger"/></svg><span class="logo">saastra</span>
<svg class="ic" style="top:37.500px"><use href="#bell"/></svg><span class="t s" style="top:44.500px">Уведомления</span>
<i class="av" style="top:65px">Ф</i><span class="t s2" style="top:74px">Все франшизы</span><svg class="ch" style="left:114px;top:70px"><use href="#chev"/></svg>
<i class="av" style="top:95px">Г</i><span class="t s2" style="top:104px">Омск</span><svg class="ch" style="left:114px;top:100px"><use href="#chev"/></svg>
<svg class="ic" style="top:126.500px"><use href="#cart"/></svg><span class="t s" style="top:133.500px">Заказы</span>
<svg class="ic" style="top:155.500px"><use href="#grid"/></svg><span class="t s" style="top:162.500px">Товары</span>
<svg class="ic" style="top:185px"><use href="#chat"/></svg><span class="t s" style="top:192px">Чат</span>
<svg class="ic" style="top:215px"><use href="#stats"/></svg><span class="t s" style="top:222px">Статистика</span>
<div class="bar" style="top:237.500px"></div><svg class="ic on" style="top:244.500px"><use href="#house"/></svg><span class="t s on-t" style="top:251.500px">Склад</span>
<svg class="ic" style="top:274px"><use href="#shop"/></svg><span class="t s" style="top:281px">Мастерские</span>
<hr style="top:297.500px"><hr style="top:329px"><hr style="top:361px"><hr style="top:393.500px">
<svg class="ch b" style="left:11px;top:309px"><use href="#chev"/></svg><span class="t s3" style="top:313.500px">Финансы</span>
<svg class="ch b" style="left:11px;top:341px"><use href="#chev"/></svg><span class="t s3" style="top:345px">Маркетинг</span>
<svg class="ch b" style="left:11px;top:373px"><use href="#chev"/></svg><span class="t s3" style="top:377px">Пользователи</span>
</div>
<div class="in" style="left:-940px;top:-1362.500px">
<div class="hd" style="left:1075px;top:1362.500px;width:365px;height:32.500px"></div>
<svg class="ic" style="left:1088px;top:1371px;color:#2b3a4e;stroke-width:1.6"><use href="#back"/></svg>
<span class="t ttl" style="left:1370.700px;top:1378px">Поставка № 1068</span>
<span class="t h" style="left:1088px;top:1415.500px">Информация</span>
<div class="c" style="left:1088px;top:1432px;width:660px;height:92px"></div>
<div class="f" style="left:1097px;top:1440.600px;width:315px;height:25.400px"></div><span class="t p" style="left:1106px;top:1453px">16.08.2022</span>
<div class="f" style="left:1418.300px;top:1440.600px;width:200px;height:25.400px"></div><span class="t p" style="left:1427px;top:1453px">16:15</span>
<span class="t l" style="left:1097px;top:1481px">Сотрудник</span><span class="t l" style="left:1418.300px;top:1481px">Мастерская</span>
<div class="f" style="left:1097px;top:1490px;width:315px;height:24.600px"></div><span class="t p" style="left:1106px;top:1502px">Анастасия</span>
<div class="f" style="left:1418.300px;top:1490px;width:200px;height:24.600px"></div><span class="t p" style="left:1427px;top:1502px">Ленина, 14</span>
<span class="t h" style="left:1088px;top:1565px">Состав поставки</span>
<div class="c" style="left:1088px;top:1587px;width:660px;height:217.500px"></div>
<span class="t v" style="left:1097px;top:1603px;color:#5a7397">Наименование</span><span class="t v" style="left:1404.700px;top:1603px;color:#5a7397">Себестоимость</span>
<div class="ln" style="left:1097px;top:1619px;width:640px"></div><div class="ln" style="left:1097px;top:1656.500px;width:640px"></div><div class="ln" style="left:1097px;top:1693.300px;width:640px"></div><div class="ln" style="left:1097px;top:1730px;width:640px"></div><div class="ln" style="left:1097px;top:1767px;width:640px"></div>
<svg class="thumb" style="left:1097px;top:1625.500px"><use href="#thumb"/></svg><span class="t tn" style="left:1126.700px;top:1638px">Большая шляпная коробка (лавандова...</span><div class="f" style="left:1404.700px;top:1625.500px;width:60px;height:25.100px"></div><span class="t p" style="left:1413.500px;top:1638px">1500₽</span>
<svg class="thumb" style="left:1097px;top:1662.300px"><use href="#thumb"/></svg><span class="t tn" style="left:1126.700px;top:1674.700px">Большая шляпная коробка (лавандова...</span><div class="f" style="left:1404.700px;top:1662.300px;width:60px;height:25.100px"></div><span class="t p" style="left:1413.500px;top:1674.700px">1500₽</span>
<svg class="thumb" style="left:1097px;top:1699.100px"><use href="#thumb"/></svg><span class="t tn" style="left:1126.700px;top:1711.600px">Большая шляпная коробка (лавандова...</span><div class="f" style="left:1404.700px;top:1699.100px;width:60px;height:25.100px"></div><span class="t p" style="left:1413.500px;top:1711.600px">1500₽</span>
<svg class="thumb" style="left:1097px;top:1736.100px"><use href="#thumb"/></svg><span class="t tn" style="left:1126.700px;top:1748.600px">Большая шляпная коробка (лавандова...</span><div class="f" style="left:1404.700px;top:1736.100px;width:60px;height:25.100px"></div><span class="t p" style="left:1413.500px;top:1748.600px">1500₽</span>
<svg class="thumb" style="left:1097px;top:1773px"><use href="#thumb"/></svg><span class="t tn" style="left:1126.700px;top:1785.500px">Большая шляпная коробка (лавандова...</span><div class="f" style="left:1404.700px;top:1773px;width:60px;height:25.100px"></div><span class="t p" style="left:1413.500px;top:1785.500px">1500₽</span>
</div></div>

<!-- FRAME 7 -->
<div class="frame" style="left:0;top:1894.500px;width:499px;height:511.500px;border-radius:0 17px 17px 0">
<div class="in" style="left:0;top:-1894.500px">
<div class="hd" style="left:0;top:1894.500px;width:499px;height:32.500px"></div>
<span class="t ttl" style="left:109px;top:1910px">Списание № 8109</span><span class="t dots" style="left:185.500px;top:1910px">•••</span>
<div class="ok" style="left:465px;top:1898px"><svg><use href="#check"/></svg></div>
<div class="c" style="left:-173px;top:1963.700px;width:389.700px;height:190.300px"></div>
<div class="f" style="left:-100px;top:1972px;width:118.700px;height:26px"></div>
<div class="f" style="left:24.300px;top:1972px;width:183px;height:26px"></div><span class="t p" style="left:33px;top:1984.500px">16:15 - 17:15</span>
<div class="f" style="left:-100px;top:2022px;width:307.300px;height:24.700px"></div>
<div class="f" style="left:-100px;top:2071.500px;width:306.700px;height:24px"></div><svg class="ch b" style="left:186.500px;top:2079px;stroke-width:2"><use href="#chev"/></svg>
<div class="f" style="left:-100px;top:2120px;width:307.300px;height:24.800px"></div>
<svg class="cam" style="left:126px;top:2184px;width:12px;height:12px"><use href="#pencil"/></svg><span class="t up" style="left:143.700px;top:2190px">Изменить состав</span>
<div class="c" style="left:-173px;top:2213px;width:389.700px;height:110px"></div>
<span class="t v" style="left:103.300px;top:2229px;color:#5a7397">Количество</span>
<div class="ln" style="left:-164px;top:2245px;width:371px"></div><div class="ln" style="left:-164px;top:2284px;width:371px"></div>
<span class="t tn" style="left:-134px;top:2265px">Большая шляпная коробка (лавандова...</span>
<div class="st" style="left:103.300px;top:2252.500px;width:70px;height:25.500px"><svg><use href="#step"/></svg><span>1</span></div><svg class="tr" style="left:188.200px;top:2258.500px"><use href="#trash"/></svg>
<span class="t tn" style="left:-134px;top:2303.500px">Большая шляпная коробка (лавандова...</span>
<div class="st" style="left:103.300px;top:2291px;width:70px;height:25.500px"><svg><use href="#step"/></svg><span>1</span></div><svg class="tr" style="left:188.200px;top:2297px"><use href="#trash"/></svg>
<div class="c" style="left:230px;top:1963px;width:255px;height:274px"></div>
<svg style="position:absolute;left:244px;top:1972px;width:227.700px;height:229px;border-radius:6px" viewBox="0 0 228 229">
<rect width="228" height="229" fill="#c4c1b9"/>
<path d="M0 0h228v102l-40-2-110 4L0 108z" fill="#a5a3a2"/><path d="M0 0h70L0 42z" fill="#b0aeac" opacity=".6"/>
<ellipse cx="128" cy="165" rx="42" ry="22" fill="#9d9a93" opacity=".55" filter="url(#bl)"/><ellipse cx="82" cy="160" rx="18" ry="22" fill="#a3a098" opacity=".5" filter="url(#bl)"/>
<path d="M78 72C82 48 98 35 109 35c14 0 26 14 30 34" fill="none" stroke="#dcd78b" stroke-width="1.800"/>
<path d="M91 150h40l-5 27H97z" fill="#d9d66e"/>
<g filter="url(#bl1)">
<path d="M58 102c8-10 18-20 30-22 12-12 32-10 44-6l18 2 12 8-10 16 4 18-10 14-18 14-28 2-16-12-10-18-14-6z" fill="#46592f"/>
<path d="M46 90l14 8M172 72l-18 12M168 112l-14 6M62 130l14 2" stroke="#5d7040" stroke-width="3"/>
<g fill="#cf5a22"><circle cx="136" cy="82" r="15"/><circle cx="110.300" cy="113" r="16.500"/><circle cx="81" cy="83" r="10.500"/></g>
<g fill="#2f2410"><circle cx="136" cy="82" r="3.500"/><circle cx="110.300" cy="113" r="4"/><circle cx="81" cy="83" r="2.500"/></g>
<g fill="#e3c816"><ellipse cx="82" cy="103" rx="13" ry="9"/><circle cx="66" cy="113" r="5.500"/><circle cx="150" cy="120" r="8"/><circle cx="126" cy="146" r="9"/></g>
<g fill="#c9c7c0"><ellipse cx="97" cy="126" rx="8" ry="6"/><ellipse cx="152" cy="137" rx="5" ry="9"/><ellipse cx="107" cy="72" rx="7" ry="3"/><ellipse cx="113" cy="138" rx="5" ry="5"/><circle cx="159" cy="84" r="3"/></g>
</g>
<path d="M84 139C66 115 63 93 75 80c10-13 22-19 34-19 15 0 29 8 35 22 6 15 2 35-13 52" fill="none" stroke="#d9d479" stroke-width="2"/>
<ellipse cx="94.300" cy="148" rx="9.500" ry="8.500" fill="#f1f0ec"/>
<path d="M120 150l6 26M85 150c-3 10 2 24 0 34" stroke="#e0c52f" stroke-width="1.200" fill="none"/>
<circle cx="106.700" cy="219.600" r="2.200" fill="#d9e5f7"/><circle cx="114" cy="219.600" r="2.200" fill="#0f64f6"/><circle cx="120.700" cy="219.600" r="2.200" fill="#d9e5f7"/>
<rect x="196" y="7" width="24.700" height="25" rx="5" fill="#fff"/>
<path d="M208.300 14v7.500M205 18.500l3.300 3.300 3.300-3.300M203 21v3.500h10.700V21" fill="none" stroke="#2b3a4e" stroke-width="1.300"/>
</svg>
<svg class="cam" style="left:319px;top:2211px"><use href="#camera"/></svg><span class="t up" style="left:337px;top:2218px">Загрузить фото</span>
</div></div>

<!-- FRAME 8 -->
<div class="frame" style="left:519px;top:1894.500px;height:511.500px">
<div class="side">
<svg class="ic" style="left:16px;top:9px;width:12px;height:12px;color:#2b3a4e;stroke-width:2"><use href="#burger"/></svg><span class="logo">saastra</span>
<svg class="ic" style="top:37.500px"><use href="#bell"/></svg><span class="t s" style="top:44.500px">Уведомления</span>
<i class="av" style="top:65px">Ф</i><span class="t s2" style="top:74px">Все франшизы</span><svg class="ch" style="left:114px;top:70px"><use href="#chev"/></svg>
<i class="av" style="top:95px">Г</i><span class="t s2" style="top:104px">Омск</span><svg class="ch" style="left:114px;top:100px"><use href="#chev"/></svg>
<svg class="ic" style="top:126.500px"><use href="#cart"/></svg><span class="t s" style="top:133.500px">Заказы</span>
<svg class="ic" style="top:155.500px"><use href="#grid"/></svg><span class="t s" style="top:162.500px">Товары</span>
<svg class="ic" style="top:185px"><use href="#chat"/></svg><span class="t s" style="top:192px">Чат</span>
<svg class="ic" style="top:215px"><use href="#stats"/></svg><span class="t s" style="top:222px">Статистика</span>
<div class="bar" style="top:237.500px"></div><svg class="ic on" style="top:244.500px"><use href="#house"/></svg><span class="t s on-t" style="top:251.500px">Склад</span>
<svg class="ic" style="top:274px"><use href="#shop"/></svg><span class="t s" style="top:281px">Мастерские</span>
<hr style="top:297.500px"><hr style="top:329px"><hr style="top:361px"><hr style="top:393.500px">
<svg class="ch b" style="left:11px;top:309px"><use href="#chev"/></svg><span class="t s3" style="top:313.500px">Финансы</span>
<svg class="ch b" style="left:11px;top:341px"><use href="#chev"/></svg><span class="t s3" style="top:345px">Маркетинг</span>
<svg class="ch b" style="left:11px;top:373px"><use href="#chev"/></svg><span class="t s3" style="top:377px">Пользователи</span>
</div>
<div class="in" style="left:-519px;top:-1894.500px">
<div class="hd" style="left:654px;top:1894.500px;width:685px;height:32.500px"></div>
<svg class="ic" style="left:667px;top:1903px;color:#2b3a4e;stroke-width:1.6"><use href="#back"/></svg>
<span class="t ttl" style="left:940.600px;top:1910px">Перемещение № 1068</span><span class="t dots" style="left:1033.500px;top:1910px">•••</span>
<div class="ok" style="left:1305px;top:1898px"><svg><use href="#check"/></svg></div>
<span class="t h" style="left:667px;top:1948px">Отправитель</span><span class="t h" style="left:1005px;top:1948px">Получатель</span>
<div class="c" style="left:667px;top:1963.700px;width:319px;height:141.300px"></div>
<div class="f" style="left:676.600px;top:1972px;width:146.400px;height:26px"></div><span class="t p" style="left:685.500px;top:1984.500px">16.08.2022</span>
<div class="f" style="left:829px;top:1972px;width:148px;height:26px"></div><span class="t p" style="left:838px;top:1984.500px">16:15</span>
<span class="t l" style="left:676.600px;top:2013px">Склад</span>
<div class="f" style="left:676.600px;top:2022px;width:300.400px;height:25px"></div><span class="t p" style="left:685.500px;top:2034px">Ленина, 14</span><svg class="ch b" style="left:956px;top:2030px;stroke-width:2"><use href="#chev"/></svg>
<span class="t l" style="left:676.600px;top:2062.500px">Курьер</span>
<div class="f" style="left:676.600px;top:2071.500px;width:300.400px;height:24px"></div><span class="t p" style="left:685.500px;top:2083px">Александр</span>
<div class="c" style="left:1005px;top:1963.700px;width:318.600px;height:92.300px"></div>
<div class="f" style="left:1014px;top:1972px;width:147px;height:26px"></div><span class="t p" style="left:1023px;top:1984.500px">16.08.2022</span>
<div class="f" style="left:1167px;top:1972px;width:147.500px;height:26px"></div><span class="t p" style="left:1176px;top:1984.500px">16:15</span>
<span class="t l" style="left:1014px;top:2013px">Склад</span>
<div class="f" style="left:1014px;top:2022px;width:300.500px;height:25px"></div><span class="t p" style="left:1023px;top:2034px">Ленина, 14</span><svg class="ch b" style="left:1294px;top:2030px;stroke-width:2"><use href="#chev"/></svg>
<span class="t h" style="left:667px;top:2132px">Состав перемещение</span>
<svg class="cam" style="left:1235px;top:2125px;width:12px;height:12px"><use href="#pencil"/></svg><span class="t up" style="left:1252px;top:2131px">Изменить состав</span>
<div class="c" style="left:667px;top:2154.400px;height:150.200px;width:657.600px"></div>
<span class="t v" style="left:676.600px;top:2170px;color:#5a7397">Наименование</span><span class="t v" style="left:983.500px;top:2170px;color:#5a7397">Себестоимость</span><span class="t v" style="left:1086.300px;top:2170px;color:#5a7397">Розничная цена</span><span class="t v" style="left:1188.600px;top:2170px;color:#5a7397">Количество</span>
<div class="ln" style="left:676.600px;top:2186.500px;width:639px"></div><div class="ln" style="left:676.600px;top:2225.400px;width:639px"></div><div class="ln" style="left:676.600px;top:2264.600px;width:639px"></div>
<svg class="thumb" style="left:676.600px;top:2193.500px"><use href="#thumb"/></svg><span class="t tn" style="left:706px;top:2206px">Большая шляпная коробка (лавандова...</span><div class="f" style="left:983.500px;top:2193.500px;width:93.200px;height:25.500px"></div><span class="t p" style="left:992.500px;top:2206px">1500₽</span><div class="f" style="left:1086.300px;top:2193.500px;width:93.200px;height:25.500px"></div><span class="t p" style="left:1095.300px;top:2206px">1500₽</span><div class="st" style="left:1188.600px;top:2194px;width:93.200px;height:25px"><svg><use href="#step"/></svg><span>1</span></div><svg class="tr" style="left:1297.300px;top:2200px"><use href="#trash"/></svg>
<svg class="thumb" style="left:676.600px;top:2233px"><use href="#thumb"/></svg><span class="t tn" style="left:706px;top:2245.400px">Большая шляпная коробка (лавандова...</span><div class="f" style="left:983.500px;top:2233px;width:93.200px;height:25.500px"></div><span class="t p" style="left:992.500px;top:2245.400px">1500₽</span><div class="f" style="left:1086.300px;top:2233px;width:93.200px;height:25.500px"></div><span class="t p" style="left:1095.300px;top:2245.400px">1500₽</span><div class="st" style="left:1188.600px;top:2233px;width:93.200px;height:25px"><svg><use href="#step"/></svg><span>1</span></div><svg class="tr" style="left:1297.300px;top:2239px"><use href="#trash"/></svg>
<svg class="thumb" style="left:676.600px;top:2272px"><use href="#thumb"/></svg><span class="t tn" style="left:706px;top:2284.600px">Большая шляпная коробка (лавандова...</span><div class="f" style="left:983.500px;top:2272px;width:93.200px;height:25.500px"></div><span class="t p" style="left:992.500px;top:2284.600px">1500₽</span><div class="f" style="left:1086.300px;top:2272px;width:93.200px;height:25.500px"></div><span class="t p" style="left:1095.300px;top:2284.600px">1500₽</span><div class="st" style="left:1188.600px;top:2272px;width:93.200px;height:25px"><svg><use href="#step"/></svg><span>1</span></div><svg class="tr" style="left:1297.300px;top:2278px"><use href="#trash"/></svg>
</div></div>
</body></html>
